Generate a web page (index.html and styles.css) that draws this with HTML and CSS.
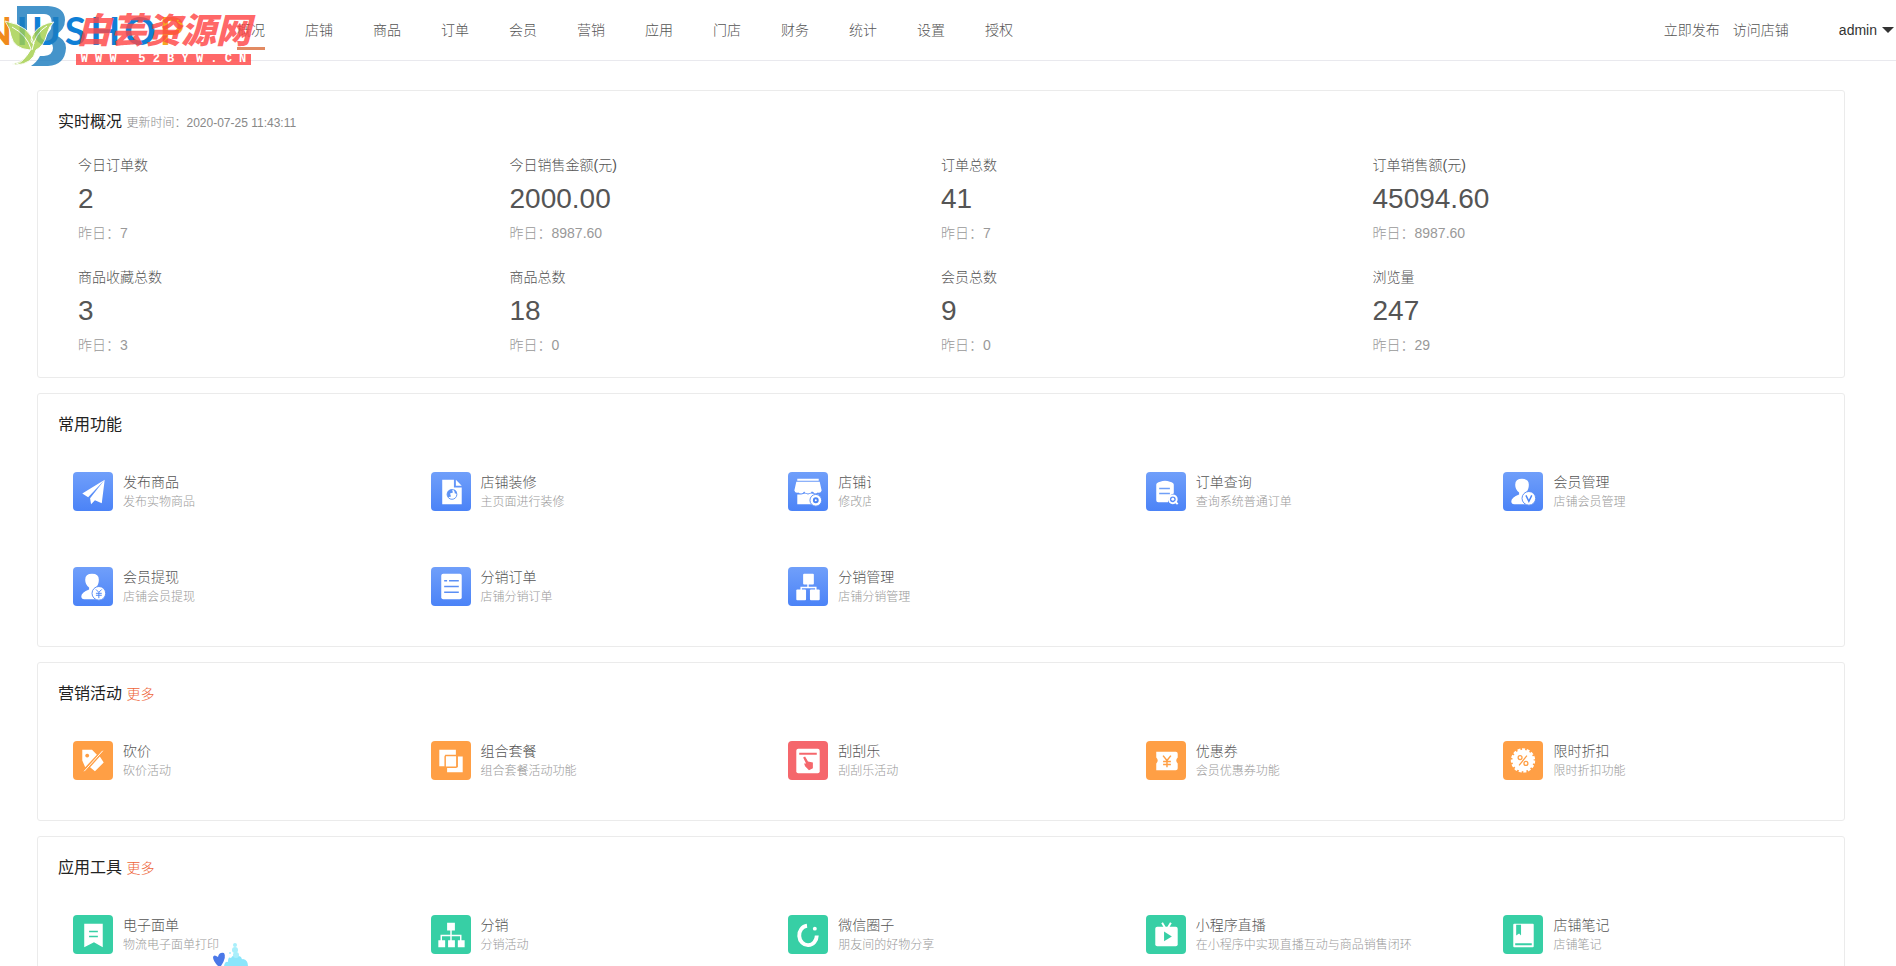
FILE: index.html
```html
<!DOCTYPE html>
<html lang="zh-CN">
<head>
<meta charset="utf-8">
<title>概况</title>
<link rel="stylesheet" href="styles.css">
</head>
<body>
<svg class="defs" aria-hidden="true">
  <defs>
    <symbol id="i-plane" viewBox="0 0 40 40"><path fill="#fff" d="M32 8 9 22l6 4zM32 8 17 27l1 6 4-4 7 3z"/></symbol>
    <symbol id="i-doc" viewBox="0 0 40 40"><path fill="#fff" d="M11 8h12v8h8v17H11zM25 8l6 6h-6z"/><circle cx="21" cy="23" r="5" fill="none" stroke="#5e93f5"/><path fill="#5e93f5" d="M16 23q0-5 5-5l1 3-3 1 1 3-3 1zM23 18q3 1 3 4l-2 0z"/></symbol>
    <symbol id="i-shop" viewBox="0 0 40 40"><path fill="#fff" d="M9 7h22v2H9zM8 10h24l2 9q-1 3-4 2-1 1-3 1-2-2-3-2-1 2-4 2t-4-2q-1 2-3 2-2 0-3-1-3 1-4-2zM9 23h4l4-1 3 1 3-1 8 1v10H9z"/><circle cx="28" cy="29" r="6" fill="#fff" stroke="#5b8ff5"/><circle cx="28" cy="29" r="2" fill="none" stroke="#4c86f6" stroke-width="2"/></symbol>
    <symbol id="i-query" viewBox="0 0 40 40"><path fill="#fff" d="M10 13q0-2 4-3 5-2 10 0 4 1 4 3v9q-6 1-6 9H12q-2 0-2-2z"/><path stroke="#6f9ff7" stroke-width="1.5" d="M13 17h11M13 22h11"/><circle cx="27" cy="28" r="4" fill="none" stroke="#fff" stroke-width="2"/><path d="m29 30 3 3" stroke="#fff" stroke-width="2"/><circle cx="27" cy="28" r="1.5" fill="#fff"/></symbol>
    <symbol id="i-user" viewBox="0 0 40 40"><path fill="#fff" d="M12 13q0-6 7-6t7 6q0 5-3 8v2l5 3v7H11q-3 0-3-3 0-4 8-7v-2q-4-3-4-8z"/><circle cx="26" cy="27" r="7" fill="#fff" stroke="#5a8ef5"/></symbol>
    <symbol id="i-member" viewBox="0 0 40 40"><use href="#i-user"/><path d="m23 24 3 6 3-6" fill="none" stroke="#4c86f6" stroke-width="1.5"/></symbol>
    <symbol id="i-cash" viewBox="0 0 40 40"><use href="#i-user"/><path d="m23 23 3 3 3-3M26 26v6M23 27h6M23 29h6" fill="none" stroke="#4c86f6"/></symbol>
    <symbol id="i-list" viewBox="0 0 40 40"><rect x="10" y="7" width="21" height="26" rx="2" fill="#fff"/><path stroke="#5b8ff5" stroke-width="1.5" d="M13 14h3m2 0h10M13 20h15M13 26h15"/></symbol>
    <symbol id="i-manage" viewBox="0 0 40 40"><path fill="none" stroke="#fff" stroke-width="1.5" d="M20 16v5M13 24v-3h15v3"/><g fill="#fff"><rect x="15" y="7" width="11" height="11" rx="1"/><rect x="8" y="23" width="10" height="11" rx="1"/><rect x="22" y="23" width="10" height="11" rx="1"/></g></symbol>
    <symbol id="i-cut" viewBox="0 0 40 40"><path fill="#fff" fill-rule="evenodd" d="M9 9h10l5 5-12 13-3-7zM14 13a2 2 0 1 0 .1 0zM27 16l4 6-9 9-5-4z"/><path stroke="#fff" d="m11 31 19-21"/></symbol>
    <symbol id="i-combo" viewBox="0 0 40 40"><path fill="#fff" d="M8 9h17v5H14v12H8zM27 16h5v16H16v-5h11z"/><rect x="14" y="15" width="12" height="12" rx="1" fill="#fff" stroke="#ff9f45" stroke-width="1.5"/></symbol>
    <symbol id="i-scratch" viewBox="0 0 40 40"><rect x="8" y="8" width="24" height="25" rx="2" fill="#fff"/><path stroke="#f5676c" stroke-width="2" d="M11 13h18"/><path fill="#f5676c" d="m15 17 2-1 3 5 5 1v6l-4 2-4-4-1-3 2 0z"/></symbol>
    <symbol id="i-coupon" viewBox="0 0 40 40"><path fill="#fff" d="M10 11h20q2 0 2 2v4q-3 3 0 6v5q0 2-2 2H10V23q3-3 0-6z"/><path fill="none" stroke="#ff9f45" stroke-width="1.5" d="m17 15 4 5 4-5M21 20v7M17 21h8M17 24h8"/></symbol>
    <symbol id="i-sale" viewBox="0 0 40 40"><circle cx="20" cy="20" r="11" fill="#fff"/><circle cx="20" cy="20" r="11" fill="none" stroke="#fff" stroke-width="3" stroke-dasharray="3 1.6"/><g fill="none" stroke="#ff9f45" stroke-width="1.3"><circle cx="17" cy="17" r="2"/><circle cx="23" cy="23" r="2"/><path d="m24 15-8 10"/></g></symbol>
    <symbol id="i-bill" viewBox="0 0 40 40"><path fill="#fff" d="M11 9h19v24l-9-5-10 5z"/><path stroke="#37cfa5" stroke-width="1.5" d="M16 17h9M16 22h9"/></symbol>
    <symbol id="i-tree" viewBox="0 0 40 40"><path fill="none" stroke="#fff" stroke-width="1.5" d="M20 14v14M10 27v-6h20v6"/><path fill="#fff" d="M16 8h8v8h-8zM7 26h7v7H7zM17 26h7v7h-7zM27 26h7v7h-7z"/></symbol>
    <symbol id="i-circle" viewBox="0 0 40 40"><path d="M19 11a9 10 0 1 0 10 10" fill="none" stroke="#fff" stroke-width="4"/><circle cx="27" cy="14" r="2" fill="#fff"/></symbol>
    <symbol id="i-live" viewBox="0 0 40 40"><path stroke="#fff" stroke-width="2" d="m16 8 3 5m6-5-3 5"/><rect x="9" y="12" width="23" height="20" rx="2" fill="#fff"/><path fill="#37cfa5" d="m18 17 8 5-8 5z"/></symbol>
    <symbol id="i-note" viewBox="0 0 40 40"><rect x="10" y="9" width="21" height="24" rx="1" fill="#fff"/><path fill="#37cfa5" d="M13 10h5v11l-2-2-3 2zM12 29h17v2H12z"/></symbol>
  </defs>
</svg>

<div class="page">
  <header class="header">
    <div class="wordmark" aria-label="NIUSHOP"><span class="mark-n">N</span><span>I</span><span>U</span><span>S</span><span>H</span><span>O</span><span class="mark-p">P</span></div>
    <nav class="nav">
      <a class="active" href="#">概况</a><a href="#">店铺</a><a href="#">商品</a><a href="#">订单</a><a href="#">会员</a><a href="#">营销</a><a href="#">应用</a><a href="#">门店</a><a href="#">财务</a><a href="#">统计</a><a href="#">设置</a><a href="#">授权</a>
    </nav>
    <div class="links"><a href="#">立即发布</a><a href="#">访问店铺</a></div>
    <button class="account" type="button">admin<svg width="12" height="6" viewBox="0 0 12 6"><path fill="#333" d="M0 0h12L6 6z"/></svg></button>
    <div class="stamp">
      <svg class="stamp-logo" width="72" height="68" viewBox="0 0 72 68">
        <path fill="#1d7dbf" fill-rule="evenodd" d="M17 6H48Q65 7 65 20 65 30 55 35 66 39 66 48 65 65 48 66H31Q37 62 40 56H44Q53 55 53 48 53 41 43 40 47 35 51 29 54 14 44 14H27V31L17 24z"/>
        <path fill="#a5d04c" stroke="#fff" stroke-width="1" d="M5 21Q31 26 34 44 28 42 34 33 41 23 54 22 49 26 47 34 44 46 36 50 33 64 16 65L12 64Q24 62 30 50 14 49 11 36 10 28 5 21z"/>
        <path fill="none" stroke="#fff" stroke-width="1" d="M12 27Q27 35 31 49 23 63 16 64M47 26Q35 33 32 50"/>
      </svg>
      <div class="stamp-text">
        <strong>白芸资源网</strong>
        <span>W W W . 5 2 B Y W . C N</span>
      </div>
    </div>
  </header>

  <main class="main">
    <section class="card">
      <h2>实时概况 <small>更新时间：2020-07-25 11:43:11</small></h2>
      <div class="stats">
        <div class="stat"><p>今日订单数</p><strong>2</strong><span>昨日：7</span></div>
        <div class="stat"><p>今日销售金额(元)</p><strong>2000.00</strong><span>昨日：8987.60</span></div>
        <div class="stat"><p>订单总数</p><strong>41</strong><span>昨日：7</span></div>
        <div class="stat"><p>订单销售额(元)</p><strong>45094.60</strong><span>昨日：8987.60</span></div>
        <div class="stat"><p>商品收藏总数</p><strong>3</strong><span>昨日：3</span></div>
        <div class="stat"><p>商品总数</p><strong>18</strong><span>昨日：0</span></div>
        <div class="stat"><p>会员总数</p><strong>9</strong><span>昨日：0</span></div>
        <div class="stat"><p>浏览量</p><strong>247</strong><span>昨日：29</span></div>
      </div>
    </section>

    <section class="card">
      <h2>常用功能</h2>
      <div class="tiles blue">
        <a class="tile" href="#"><svg><use href="#i-plane"/></svg><span><b>发布商品</b><i>发布实物商品</i></span></a>
        <a class="tile" href="#"><svg><use href="#i-doc"/></svg><span><b>店铺装修</b><i>主页面进行装修</i></span></a>
        <a class="tile clipped" href="#"><svg><use href="#i-shop"/></svg><span><b>店铺设</b><i>修改店</i></span></a>
        <a class="tile" href="#"><svg><use href="#i-query"/></svg><span><b>订单查询</b><i>查询系统普通订单</i></span></a>
        <a class="tile" href="#"><svg><use href="#i-member"/></svg><span><b>会员管理</b><i>店铺会员管理</i></span></a>
        <a class="tile" href="#"><svg><use href="#i-cash"/></svg><span><b>会员提现</b><i>店铺会员提现</i></span></a>
        <a class="tile" href="#"><svg><use href="#i-list"/></svg><span><b>分销订单</b><i>店铺分销订单</i></span></a>
        <a class="tile" href="#"><svg><use href="#i-manage"/></svg><span><b>分销管理</b><i>店铺分销管理</i></span></a>
      </div>
    </section>

    <section class="card">
      <h2>营销活动 <a href="#">更多</a></h2>
      <div class="tiles orange">
        <a class="tile" href="#"><svg><use href="#i-cut"/></svg><span><b>砍价</b><i>砍价活动</i></span></a>
        <a class="tile" href="#"><svg><use href="#i-combo"/></svg><span><b>组合套餐</b><i>组合套餐活动功能</i></span></a>
        <a class="tile red" href="#"><svg><use href="#i-scratch"/></svg><span><b>刮刮乐</b><i>刮刮乐活动</i></span></a>
        <a class="tile" href="#"><svg><use href="#i-coupon"/></svg><span><b>优惠券</b><i>会员优惠券功能</i></span></a>
        <a class="tile" href="#"><svg><use href="#i-sale"/></svg><span><b>限时折扣</b><i>限时折扣功能</i></span></a>
      </div>
    </section>

    <section class="card">
      <h2>应用工具 <a href="#">更多</a></h2>
      <div class="tiles green">
        <a class="tile" href="#"><svg><use href="#i-bill"/></svg><span><b>电子面单</b><i>物流电子面单打印</i></span></a>
        <a class="tile" href="#"><svg><use href="#i-tree"/></svg><span><b>分销</b><i>分销活动</i></span></a>
        <a class="tile" href="#"><svg><use href="#i-circle"/></svg><span><b>微信圈子</b><i>朋友间的好物分享</i></span></a>
        <a class="tile" href="#"><svg><use href="#i-live"/></svg><span><b>小程序直播</b><i>在小程序中实现直播互动与商品销售闭环</i></span></a>
        <a class="tile" href="#"><svg><use href="#i-note"/></svg><span><b>店铺笔记</b><i>店铺笔记</i></span></a>
      </div>
    </section>
  </main>

  <svg class="splash" width="36" height="24" viewBox="0 0 36 24" aria-hidden="true">
    <path fill="#4a78e8" d="M0 15q1-3 5 0 1-5 6-4 3 4-3 13H5Q0 19 0 15z"/>
    <path fill="#8be6fb" d="M11 24q1-5 4-4 0-6 3-4 2-4 6-1 1-2 4 0 1 3 2 2 5 1 5 7z"/>
    <g fill="#a9effb"><circle cx="22" cy="3" r="2"/><circle cx="22" cy="8" r="3"/><circle cx="23" cy="13" r="3"/><circle cx="17" cy="11" r="1"/></g>
  </svg>
</div>
</body>
</html>
```
FILE: styles.css
```css
* { box-sizing: border-box; }

body {
  margin: 0;
  background: #fff;
  color: #333;
  font: 14px/20px "Liberation Sans", "Noto Sans CJK SC", sans-serif;
  font-weight: 300;
}

a { color: inherit; text-decoration: none; }
.defs { display: none; }

.page { position: relative; height: 100vh; overflow: hidden; }

.header {
  position: relative;
  display: flex;
  align-items: center;
  height: 61px;
  border-bottom: 1px solid #e9e9ee;
}

.wordmark {
  display: flex;
  flex: none;
  justify-content: flex-end;
  gap: 4px;
  width: 184px;
  margin-right: 53px;
  color: #0f7fd6;
  font: 700 39px/60px Lato, sans-serif;
}
.mark-n { color: #f08a1c; }
.mark-p { color: #f5a623; }

.nav { display: flex; flex: 1; gap: 40px; color: #555; }
.nav a { height: 40px; padding-top: 10px; border-bottom: 3px solid transparent; white-space: nowrap; }
.nav a.active { border-color: #e28a62; }
.links { display: flex; gap: 13px; margin-right: 50px; color: #555; }

.account {
  display: flex;
  align-items: center;
  gap: 5px;
  margin-right: 2px;
  padding: 0;
  border: 0;
  background: none;
  color: #333;
  font: inherit;
}

.stamp { position: absolute; top: 0; left: 0; display: flex; opacity: .82; pointer-events: none; }
.stamp-logo { display: block; }
.stamp-text { display: flex; flex-direction: column; width: 175px; margin-left: 4px; padding-top: 8px; color: #ff4747; }
.stamp-text strong { font: italic 900 35px/40px "Noto Sans CJK SC", sans-serif; white-space: nowrap; }
.stamp-text span {
  margin-top: 6px;
  background: #ff4747;
  color: #fff;
  font: 700 12px/11px "Liberation Mono", monospace;
  text-align: center;
  white-space: nowrap;
}

.main { display: flex; flex-direction: column; gap: 15px; padding: 29px 51px 0 37px; }
.card { flex: none; padding: 20px; border: 1px solid #ebebeb; border-radius: 3px; }

h2 { margin: 0; color: #222; font-size: 16px; line-height: 22px; font-weight: 400; }
h2 small { color: #888; font-size: 12px; font-weight: 300; }
h2 a { color: #ee6438; font-size: 14px; font-weight: 300; }

.stats { display: grid; grid-template-columns: repeat(4, 1fr); row-gap: 22px; padding: 21px 20px 0; }
.stat { display: flex; flex-direction: column; height: 90px; color: #555; }
.stat p { margin: 0; }
.stat strong { margin: 6px 0; color: #555; font-size: 28px; line-height: 36px; font-weight: 400; }
.stat span { color: #999; }

.tiles { display: grid; grid-template-columns: repeat(5, 1fr); gap: 56px 21px; padding: 36px 0 20px 15px; margin-right: -16px; }
.tile { display: flex; gap: 10px; height: 39px; white-space: nowrap; }
.tile svg { flex: none; width: 40px; height: 39px; border-radius: 4px; }
.tile span { display: flex; flex-direction: column; }
.tile b { color: #555; font-weight: 300; }
.tile i { color: #999; font-size: 12px; font-style: normal; font-weight: 300; }
.clipped span { width: 33px; overflow: hidden; }

.blue svg { background: linear-gradient(#709ffa, #4b83f7); }
.orange svg { background: #ff9f45; }
.orange .red svg { background: #f5676c; }
.green svg { background: #37cfa5; }

.splash { position: absolute; bottom: 0; left: 213px; }
```
